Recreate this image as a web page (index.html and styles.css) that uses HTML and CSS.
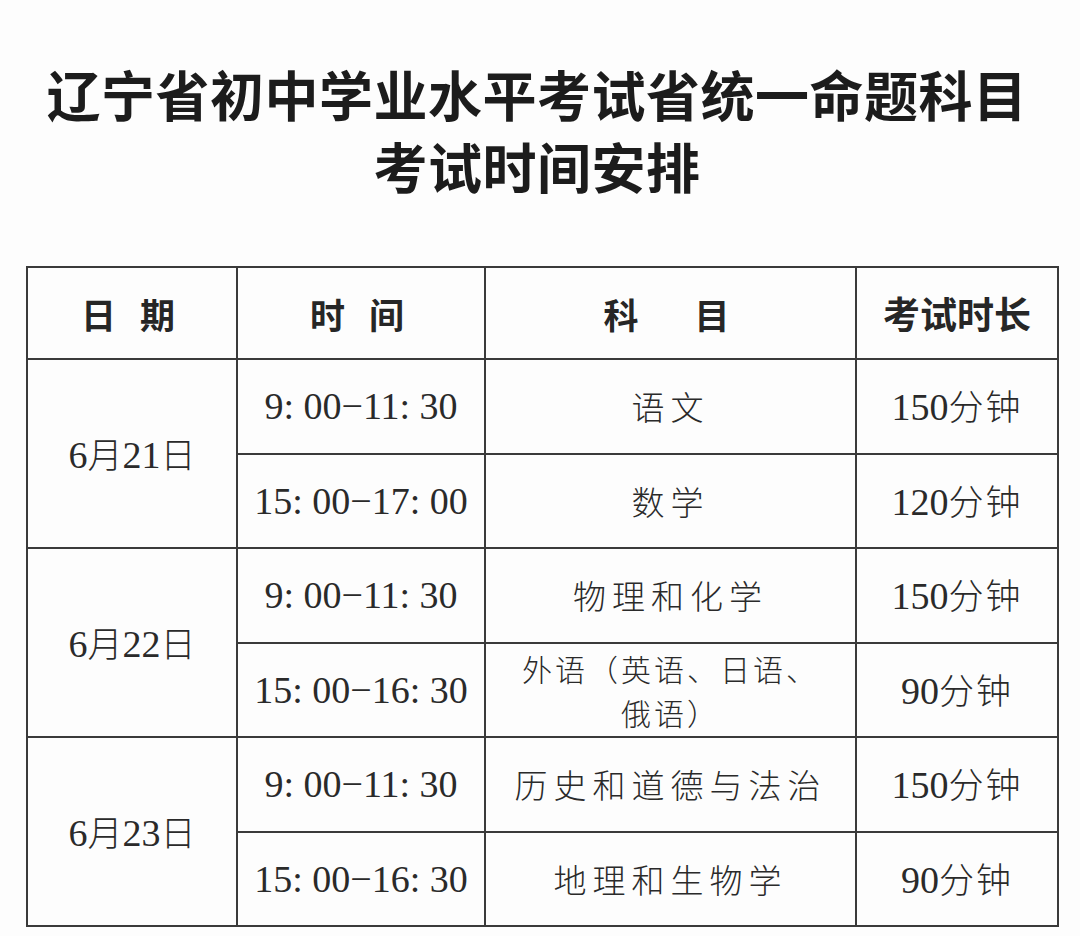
FILE: index.html
```html
<!DOCTYPE html>
<html lang="zh-CN">
<head>
<meta charset="utf-8">
<link rel="stylesheet" href="styles.css">
</head>
<body>
<div class="page">
  <h1 class="title">辽宁省初中学业水平考试省统一命题科目<br>考试时间安排</h1>
  <table class="sched">
    <colgroup>
      <col class="c1"><col class="c2"><col class="c3"><col class="c4">
    </colgroup>
    <thead>
      <tr class="head">
        <th>日&nbsp;期</th>
        <th>时&nbsp;间</th>
        <th>科&nbsp;&nbsp;&nbsp;目</th>
        <th class="dur-h">考试时长</th>
      </tr>
    </thead>
    <tbody>
      <tr>
        <td rowspan="2" class="date">6<span class="cj">月</span>21<span class="cj">日</span></td>
        <td class="time">9: 00−11: 30</td>
        <td class="subj">语文</td>
        <td class="dur">150<span class="cj">分钟</span></td>
      </tr>
      <tr>
        <td class="time">15: 00−17: 00</td>
        <td class="subj">数学</td>
        <td class="dur">120<span class="cj">分钟</span></td>
      </tr>
      <tr>
        <td rowspan="2" class="date">6<span class="cj">月</span>22<span class="cj">日</span></td>
        <td class="time">9: 00−11: 30</td>
        <td class="subj">物理和化学</td>
        <td class="dur">150<span class="cj">分钟</span></td>
      </tr>
      <tr>
        <td class="time">15: 00−16: 30</td>
        <td class="subj multi">外语（英语、日语、<br>俄语）</td>
        <td class="dur">90<span class="cj">分钟</span></td>
      </tr>
      <tr>
        <td rowspan="2" class="date">6<span class="cj">月</span>23<span class="cj">日</span></td>
        <td class="time">9: 00−11: 30</td>
        <td class="subj">历史和道德与法治</td>
        <td class="dur">150<span class="cj">分钟</span></td>
      </tr>
      <tr>
        <td class="time">15: 00−16: 30</td>
        <td class="subj">地理和生物学</td>
        <td class="dur">90<span class="cj">分钟</span></td>
      </tr>
    </tbody>
  </table>
</div>
</body>
</html>
```

FILE: styles.css
```css
html, body {
  margin: 0;
  padding: 0;
  background: #fdfdfd;
}
.page {
  width: 1080px;
  height: 936px;
  box-sizing: border-box;
  padding: 58px 0 0 26px;
  color: #222;
}
.title {
  margin: 0 0 64px -26px;
  width: 1080px;
  text-align: center;
  font-family: "Noto Sans CJK SC", sans-serif;
  font-weight: 700;
  font-size: 54px;
  line-height: 72px;
  letter-spacing: 0.5px;
  color: #1c1c1c;
  padding-right: 6px;
  box-sizing: border-box;
}
.sched {
  border-collapse: collapse;
  width: 1031px;
  table-layout: fixed;
}
.c1 { width: 210px; }
.c2 { width: 248px; }
.c3 { width: 371px; }
.c4 { width: 202px; }
.sched th, .sched td {
  border: 2px solid #3a3a3a;
  text-align: center;
  vertical-align: middle;
  padding: 0;
}
.head th {
  height: 90px;
  font-family: "Noto Sans CJK SC", sans-serif;
  font-weight: 700;
  font-size: 35px;
  color: #262626;
  letter-spacing: 8px;
}
.head th.dur-h {
  letter-spacing: 0;
  font-size: 37px;
}
.sched td {
  height: 92.5px;
}
.date, .dur, .time {
  font-family: "Liberation Serif", serif;
  font-size: 38px;
  line-height: 44px;
  color: #2a2a2a;
}
.cj {
  font-family: "Noto Sans CJK SC", sans-serif;
  font-weight: 300;
  font-size: 35px;
  line-height: 44px;
}
.dur .cj {
  letter-spacing: 2px;
}
.subj {
  font-family: "Noto Sans CJK SC", sans-serif;
  font-weight: 300;
  font-size: 33px;
  line-height: 48px;
  letter-spacing: 6px;
  color: #2a2a2a;
}
.subj.multi {
  line-height: 44px;
  letter-spacing: 3px;
  font-size: 30px;
}
```
